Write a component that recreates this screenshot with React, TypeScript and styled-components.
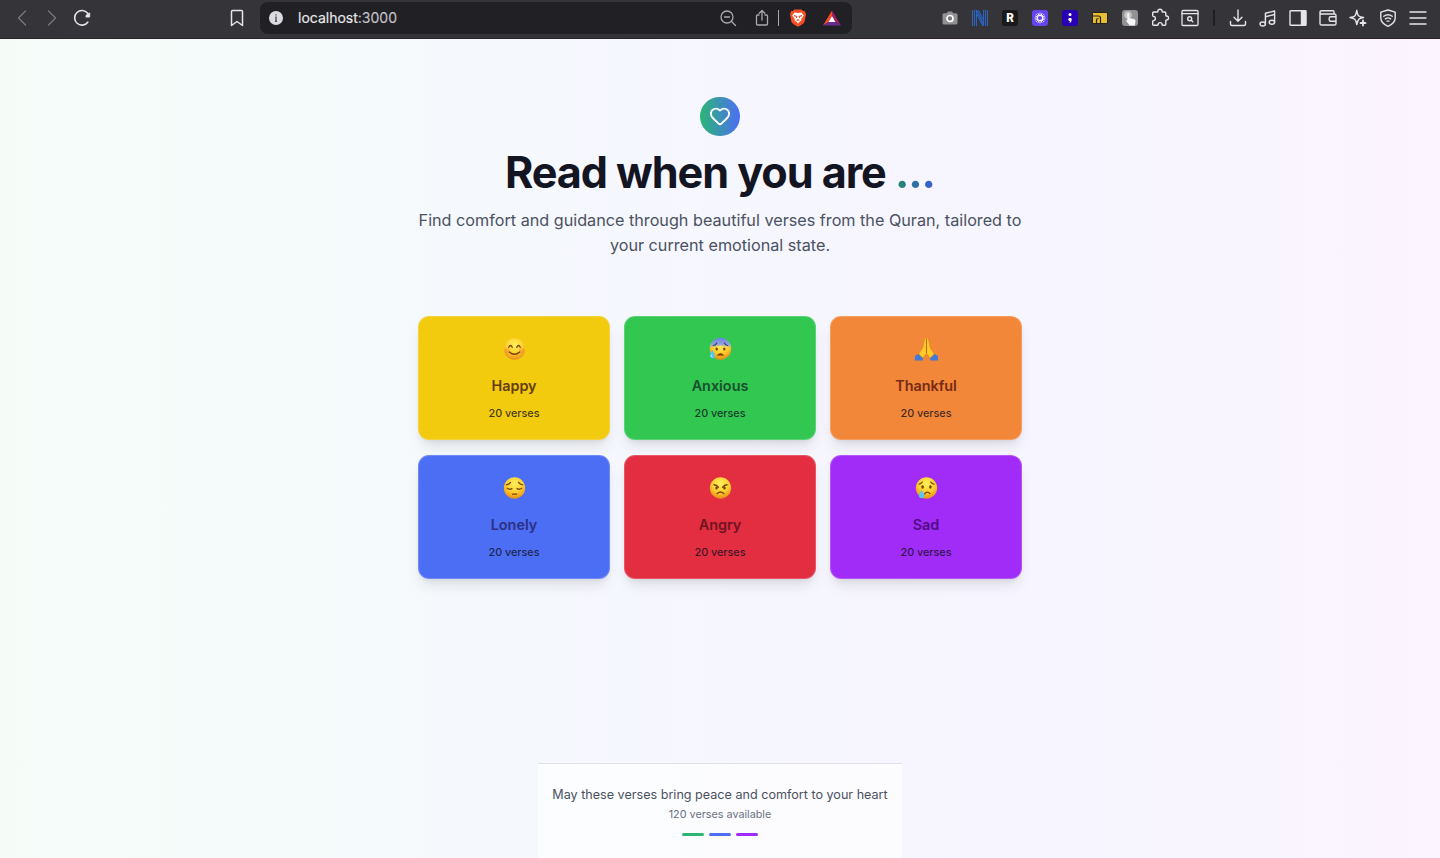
import React from "react";
import styled, { createGlobalStyle } from "styled-components";
import { Heart } from "lucide-react";

const GlobalStyle = createGlobalStyle`
  * { box-sizing: border-box; }
  body { margin: 0; font-family: Inter, "Liberation Sans", sans-serif; overflow: hidden; }
  h1, h2, p { margin: 0; }
  svg { display: block; flex: none; }
`;

const Window = styled.div`
  height: 858px;
  display: flex;
  flex-direction: column;
`;

const Toolbar = styled.header`
  height: 39px;
  flex: none;
  display: flex;
  align-items: center;
  padding: 0 12px 3px 12px;
  background: #353439;
  border-bottom: 1px solid #2c2328;
`;

const IconRow = styled.div<{ $gap: number; $ml?: number }>`
  display: flex;
  align-items: center;
  gap: ${(p) => p.$gap}px;
  margin-left: ${(p) => p.$ml ?? 0}px;
`;

const AddressBar = styled.div`
  width: 592px;
  height: 32px;
  margin-left: 13px;
  padding: 0 10px 0 6px;
  display: flex;
  align-items: center;
  border-radius: 8px;
  background: #212025;
`;

const Url = styled.span`
  flex: 1;
  margin-left: 12px;
  font: 400 14px/20px Inter, sans-serif;
  color: #e9e8ec;
  -webkit-text-stroke: 0.15px currentColor;
  span { color: #c3c2c8; }
`;

const Separator = styled.i<{ $dark?: boolean }>`
  width: ${(p) => (p.$dark ? 2 : 1)}px;
  height: 16px;
  background: ${(p) => (p.$dark ? "#1f1e23" : "#aaa9ae")};
`;

const Page = styled.main`
  flex: 1;
  min-height: 0;
  display: flex;
  flex-direction: column;
  align-items: center;
  padding-top: 58px;
  background: linear-gradient(to right, #f5fcf8 0%, #f5fbfa 14%, #f5f9fd 32%, #f6f6ff 52%, #f8f5ff 85%, #fcf4ff 100%);
`;

const Badge = styled.div`
  width: 40px;
  height: 39px;
  display: grid;
  justify-items: center;
  padding-top: 8px;
  border-radius: 20px;
  background: linear-gradient(to right, #2bb673, #4c6ef5);
`;

const Title = styled.h1`
  margin-top: 14px;
  font-size: 43.2px;
  line-height: 45px;
  font-weight: 700;
  letter-spacing: -1.08px;
  color: #141523;
`;

const Dots = styled.span`
  color: transparent;
  background: linear-gradient(to right, #228b68, #3b5bdb);
  background-clip: text;
  -webkit-background-clip: text;
`;

const Lead = styled.p`
  width: 605px;
  margin-top: 13px;
  font-size: 16.2px;
  line-height: 25px;
  text-align: center;
  color: #4a5161;
`;

const MoodGrid = styled.section`
  margin-top: 58px;
  display: grid;
  grid-template-columns: repeat(3, 192px);
  grid-auto-rows: 124px;
  gap: 15px 14px;
`;

const MoodCard = styled.article<{ $bg: string; $fg: string }>`
  display: flex;
  flex-direction: column;
  align-items: center;
  padding-top: 20px;
  border: 1px solid rgba(255, 255, 255, 0.2);
  border-radius: 11px;
  background: ${(p) => p.$bg};
  box-shadow: 0 9px 13.5px -3px rgba(0, 0, 0, 0.1), 0 4px 6px -4px rgba(0, 0, 0, 0.1);
  h2 {
    margin-top: 14px;
    font-size: 14.4px;
    line-height: 22px;
    font-weight: 600;
    color: ${(p) => p.$fg};
  }
  p {
    margin-top: 9px;
    font-size: 10.8px;
    line-height: 16px;
    font-weight: 500;
    color: rgba(15, 16, 32, 0.8);
  }
`;

const Footer = styled.footer`
  width: 364px;
  height: 95px;
  margin-top: auto;
  display: flex;
  flex-direction: column;
  align-items: center;
  padding-top: 21px;
  border-top: 1px solid #dfe3e8;
  background: rgba(255, 255, 255, 0.7);
`;

const Blessing = styled.p`
  font-size: 12.6px;
  line-height: 20px;
  color: #4a5161;
`;

const Available = styled.p`
  font-size: 10.8px;
  line-height: 19px;
  color: #6b7280;
`;

const Bars = styled.div`
  display: flex;
  gap: 5px;
  margin-top: 9px;
`;

const Bar = styled.i<{ $color: string }>`
  width: 22px;
  height: 3px;
  border-radius: 2px;
  background: ${(p) => p.$color};
`;

type Children = { children: React.ReactNode };

const Glyph = ({ children, color = "#e6e5e9", width = 1.4 }: Children & { color?: string; width?: number }) => (
  <svg width="20" height="20" viewBox="0 0 20 20" fill="none" stroke={color} strokeWidth={width} strokeLinecap="round" strokeLinejoin="round">
    {children}
  </svg>
);

const Tile = ({ children, fill }: Children & { fill: string }) => (
  <svg width="20" height="20" viewBox="0 0 20 20">
    <rect x="2" y="2" width="16" height="16" rx="3" fill={fill} />
    {children}
  </svg>
);

type Mood = "happy" | "anxious" | "thankful" | "lonely" | "angry" | "sad";

const line = { fill: "none", stroke: "#78430b", strokeWidth: 1.25, strokeLinecap: "round" as const };

const features: Record<Mood, React.ReactNode> = {
  happy: (
    <>
      <circle cx="4.3" cy="13.3" r="2.6" fill="#f2672e" opacity=".3" />
      <circle cx="18.7" cy="13.3" r="2.6" fill="#f2672e" opacity=".3" />
      <path d="M5.8 9.8q1.7-3.6 3.4 0M13.8 9.800q1.700-3.600 3.400 0M6.300 14.400q5.200 4.600 10.400 0" {...line} strokeWidth={1.4} />
    </>
  ),
  anxious: (
    <>
      <path d="M.8 11A10.700 10.700 0 0 1 22.200 11Q18 8.500 11.500 8.500T.8 11z" fill="url(#brow)" />
      <path d="M4.200 8q2.400-.3 3.500-2.400M15.300 5.600q1.200 2.100 3.500 2.400" {...line} stroke="#34478e" />
      <ellipse cx="7.700" cy="11.500" rx="1.200" ry="1.500" fill="#70400d" />
      <ellipse cx="15.300" cy="11.500" rx="1.200" ry="1.500" fill="#70400d" />
      <path d="M8.300 17.800q3.200-3.800 6.400 0z" fill="#78430b" stroke="#78430b" strokeWidth=".6" />
      <path d="M3.300 12.500q-2.600 3.700-2.600 5.700a2.600 2.600 0 0 0 5.200 0q0-2-2.600-5.700z" fill="#54c6f3" />
      <path d="M2.400 17.400q-.3 1.500 1 1.800" stroke="#d6f5ff" fill="none" />
    </>
  ),
  thankful: null,
  lonely: (
    <path d="M3.300 8.300q2.700-.2 4.200-2.400M15.500 5.900q1.400 2.100 4.200 2.400M4.200 11.600q2.200 2 4.700.5M14.100 12.100q2.500 1.500 4.700-.5M9.600 17.700h3.900" {...line} />
  ),
  angry: (
    <>
      <path d="M5 8.300q2.900.3 4.400 2.500M18 8.300q-2.900.3-4.400 2.500M8.200 17q3.300-2.800 6.600 0" {...line} strokeWidth={1.4} />
      <ellipse cx="7.500" cy="11.400" rx="1.250" ry="1.500" fill="#70400d" />
      <ellipse cx="15.500" cy="11.400" rx="1.250" ry="1.500" fill="#70400d" />
    </>
  ),
  sad: (
    <>
      <path d="M4 7.500q2 0 3.300-2M15.700 5.500q1.300 2 3.300 2M9.400 17.300q2.900-3.200 5.600-.2" {...line} />
      <ellipse cx="7.600" cy="10.500" rx="1.300" ry="1.800" fill="#70400d" />
      <ellipse cx="15.400" cy="10.500" rx="1.300" ry="1.800" fill="#70400d" />
      <path d="M6.600 13.500q-2.700 3.700-2.700 5.500a2.700 2.700 0 0 0 5.400 0q0-1.800-2.700-5.500z" fill="#58c8f1" />
    </>
  ),
};

const MoodIcon = ({ mood }: { mood: Mood }) =>
  mood === "thankful" ? (
    <svg width="24" height="24" viewBox="-.5 0 24 24">
      <path d="M.4 19 4.300 16.700 8.700 20.500 8 23.400H.4zM23.600 19 19.700 16.700 15.300 20.500 16 23.400h7.600z" fill="#4379d9" />
      <path d="M11.900 1.200q-1.400-.7-1.800 1.200L8.400 10.500 4.200 17.100 8.300 21 11.900 16.500zM12.100 1.200q1.400-.7 1.800 1.200L15.600 10.500 19.800 17.100 15.700 21 12.100 16.500z" fill="#ffc928" stroke="#d58b10" strokeWidth=".5" />
      <path d="M12 2v14" stroke="#a96510" strokeWidth=".8" />
    </svg>
  ) : (
    <svg width="24" height="24" viewBox="-1 -.5 24 24">
      <defs>
        <radialGradient id={`face-${mood}`} cx=".5" cy=".3" r=".72">
          <stop offset="0" stopColor="#fff05d" />
          <stop offset=".55" stopColor="#ffcf2e" />
          <stop offset="1" stopColor="#e88618" />
        </radialGradient>
        {mood === "anxious" && (
          <linearGradient id="brow" x1="0" y1="0" x2="0" y2="1">
            <stop offset="0" stopColor="#6582e4" />
            <stop offset=".6" stopColor="#93a3dc" />
            <stop offset="1" stopColor="#e8c95c" stopOpacity=".3" />
          </linearGradient>
        )}
      </defs>
      <circle cx="11.500" cy="11.500" r="10.700" fill={`url(#face-${mood})`} />
      {features[mood]}
    </svg>
  );

const moods: { mood: Mood; name: string; bg: string; fg: string }[] = [
  { mood: "happy", name: "Happy", bg: "#f2ca0e", fg: "#653b12" },
  { mood: "anxious", name: "Anxious", bg: "#32c751", fg: "#17502b" },
  { mood: "thankful", name: "Thankful", bg: "#f28639", fg: "#752b14" },
  { mood: "lonely", name: "Lonely", bg: "#4c6ef5", fg: "#2b2f83" },
  { mood: "angry", name: "Angry", bg: "#e22e40", fg: "#701421" },
  { mood: "sad", name: "Sad", bg: "#a12bf7", fg: "#530b86" },
];

const Extensions = () => (
  <>
    <svg width="20" height="20" viewBox="0 0 20 20">
      <path d="M4 5.300h2.700L8 3.500h4l1.300 1.800H16q1.500 0 1.500 1.500v8.200q0 1.500-1.500 1.500H4q-1.500 0-1.500-1.500V6.800q0-1.500 1.500-1.500z" fill="#929194" />
      <circle cx="10" cy="10.500" r="3" fill="#777" stroke="#fff" strokeWidth="1.700" />
    </svg>
    <svg width="20" height="20" viewBox="0 0 20 20" stroke="#2c62c0" strokeWidth="1.100">
      <path d="M2.500 2v16M4.500 2v16M6.500 2v16M13.500 2v16M15.500 2v16M17.500 2v16M7 2.500l6 13M7 6l6 12M8.500 2.500l4.500 9" fill="none" />
    </svg>
    <Tile fill="#1a1a1b">
      <text x="10" y="14.200" textAnchor="middle" fill="#fff" fontFamily="Inter, sans-serif" fontSize="11.500" fontWeight="800">R</text>
    </Tile>
    <Tile fill="#6744ee">
      <circle cx="10" cy="10" r="2.700" fill="none" stroke="#fff" strokeWidth="1.200" />
      <path d="M10 4.500v2.500M10 13v2.500M4.500 10H7M13 10h2.500M6.100 6.100l1.800 1.800M12.100 12.100l1.800 1.800M13.900 6.100l-1.800 1.800M7.900 12.100l-1.800 1.800M7.900 5l.8 2M11.300 13l.8 2M15 7.900l-2 .8M7 11.300l-2 .8M12.100 5l-.8 2M8.700 13l-.8 2M5 7.900l2 .8M13 11.300l2 .8" stroke="#fff" strokeWidth=".8" />
    </Tile>
    <Tile fill="#2700b5">
      <circle cx="10" cy="6.500" r="1.500" fill="#fff" />
      <path d="M8.200 11.300q.2-1.500 1.800-1.500 1.800 0 1.800 1.700 0 2.600-2.600 3.800.8-1.100.6-2.300-1.500-.2-1.600-1.700z" fill="#fff" />
    </Tile>
    <svg width="20" height="20" viewBox="0 0 20 20">
      <path d="M2.500 4.500h15v11h-15z" fill="#e8be34" stroke="#27231c" />
      <path d="M3 8h5.500q2 0 2 2v5.500M6.500 15.500V12q0-1.500 2-1.500" fill="none" stroke="#211e18" strokeWidth="1.200" />
    </svg>
    <Tile fill="#929292">
      <circle cx="8" cy="7" r="3.800" fill="#c5c5c5" />
      <path d="M7.200 6q0-1 1-1t1 1v4l5 1.200q1.600.3 1.300 1.900l-.7 4.400H9.700L6.100 13q.2-1.200 1.300-.8z" fill="#f4f6f8" />
    </Tile>
    <Glyph>
      <path d="M3.700 4h3.600q.5 0 .6-.7a2.100 2.100 0 0 1 4.200 0q.1.700.6.700h2.100q1 0 1 1v2.400q0 .5.700.6a2 2 0 0 1 0 4q-.7.1-.7.600v3.600q0 1-1 1h-2q-.6 0-.7-.6a2 2 0 0 0-4 0q-.1.600-.7.600H3.700q-1 0-1-1v-3q0-.5.600-.6a2 2 0 0 0 0-4.200q-.6-.1-.6-.6V5q0-1 1-1z" />
    </Glyph>
    <Glyph>
      <rect x="2" y="2.500" width="16" height="15" rx="1" strokeWidth="1.300" />
      <path d="M2 5.700h16" strokeWidth="1.300" />
      <circle cx="9.700" cy="10.700" r="2" />
      <path d="m11.200 12.200 1.600 1.600" />
    </Glyph>
  </>
);

const Tools = () => (
  <>
    <Glyph><path d="M10 2v11M6 9.300l4 4 4-4M2.500 13.500v2.500q0 1.500 1.500 1.500h12q1.500 0 1.500-1.500v-2.500" /></Glyph>
    <Glyph><ellipse cx="4.700" cy="16" rx="2.700" ry="2" /><ellipse cx="13.900" cy="14.200" rx="2.700" ry="2" /><path d="M7.400 16V5.200L16.600 3v11.200M7.400 8.700l9.200-2.200" /></Glyph>
    <Glyph><rect x="2" y="2.700" width="16" height="14.600" rx=".6" /><path d="M13.500 3.200h4v13.600h-4z" fill="#e6e5e9" /></Glyph>
    <Glyph><path d="M16 6V3.500q0-.8-.8-.8H4q-2 0-2 1.700v11q0 1.600 1.600 1.600h12.800q1.600 0 1.600-1.600V7.600Q18 6 16.400 6H3.500Q2 6 2 4.500M18 8.700h-5.300q-1.500 0-1.500 1.500v1.500q0 1.500 1.500 1.500H18" /></Glyph>
    <Glyph>
      <path d="M8.800 2.300q.7 4.700 2 5.700t4.800 1.500q-3.800.6-4.800 1.700t-2 5.300q-.8-4.200-2-5.300T2 9.500Q5.800 9 6.800 8t2-5.700z" />
      <path d="M15 12.500v5M12.500 15h5" strokeWidth="1.800" />
    </Glyph>
    <Glyph>
      <path d="m10 2 7.200 2.200v5.500q0 5.500-7.200 8.600-7.200-3.100-7.200-8.600V4.200z" />
      <path d="M5.800 8.300q4.200-3.200 8.400 0M7.400 10.900q2.600-2 5.200 0M9 13.200q1-.7 2 0" />
    </Glyph>
    <Glyph><path d="M2 4h16M2 10h16M2 16h16" /></Glyph>
  </>
);

export default function App() {
  return (
    <Window>
      <GlobalStyle />
      <Toolbar>
        <IconRow $gap={10}>
          <Glyph color="#77767b"><path d="m13.500 3-7 7 7 7" /></Glyph>
          <Glyph color="#77767b"><path d="m6.500 3 7 7-7 7" /></Glyph>
          <Glyph width={1.6}>
            <path d="M15.800 14.200A7.300 7.300 0 1 1 15.700 5.300" />
            <path d="M17.700 5.300v3.800h-3.800q-.3-3.200 3.800-3.800z" fill="#e6e5e9" strokeWidth=".8" />
          </Glyph>
        </IconRow>
        <IconRow $gap={0} $ml={135}>
          <Glyph width={1.5}><path d="M5.500 2.500h9q1 0 1 1v14l-5.500-4-5.500 4v-14q0-1 1-1z" /></Glyph>
        </IconRow>
        <AddressBar>
          <svg width="20" height="20" viewBox="0 0 20 20">
            <circle cx="10" cy="10" r="7" fill="#dcdbe1" />
            <path d="M10 6.200v1.300M9.200 9.200h.8v4M9 13.200h2" fill="none" stroke="#55545a" strokeWidth="1.400" />
          </svg>
          <Url>localhost<span>:3000</span></Url>
          <IconRow $gap={0}>
            <Glyph color="#aaa9ae" width={1.3}><circle cx="9" cy="9" r="6" /><path d="M6.500 9h5M13.500 13.500l4 4" /></Glyph>
            <IconRow $gap={6} $ml={14}>
              <Glyph color="#aaa9ae" width={1.3}><path d="M7 7H5.500q-1 0-1 1v8q0 1 1 1h9q1 0 1-1V8q0-1-1-1H13M10 12V2.500M7.200 5.200 10 2.500l2.800 2.700" /></Glyph>
              <Separator />
            </IconRow>
            <IconRow $gap={14} $ml={9}>
              <svg width="20" height="20" viewBox="0 0 20 20">
                <path d="M6.500 1.500h7l1.600 1.600 1.700-.2 1.200 3.500-1.500 7.500q-1 2-6.500 4.800-5.500-2.800-6.500-4.800L2 6.400l1.200-3.500 1.700.2z" fill="#fa4e24" />
                <path d="m6.500 4.500 3.500.6 3.500-.6 2.300 3-2.600 3.600.2 1.400-2.100 1.300L10 15.700l-1.300-1.900-2.100-1.300.2-1.400-2.600-3.600z" fill="#fff" />
                <path d="m6 7.600 2.700.8-.3 1.600M14 7.600l-2.700.8.3 1.600M8.700 12.500l1.300-.8 1.300.8" fill="none" stroke="#fa4e24" strokeWidth="1.100" />
              </svg>
              <svg width="20" height="20" viewBox="0 0 20 20">
                <path d="M10 2.500v5.400L6.500 14 1 17.500z" fill="#ff4724" />
                <path d="m10 2.500 9 15-5.500-3.500L10 7.900z" fill="#9e1f63" />
                <path d="M1 17.500 6.500 14h7l5.500 3.500z" fill="#662d91" />
                <path d="m10 7.900 3.500 6.100h-7z" fill="#fff" />
              </svg>
            </IconRow>
          </IconRow>
        </AddressBar>
        <IconRow $gap={10} $ml={88}><Extensions /></IconRow>
        <IconRow $gap={0} $ml={13}><Separator $dark /></IconRow>
        <IconRow $gap={10} $ml={13}><Tools /></IconRow>
      </Toolbar>
      <Page>
        <Badge><Heart size={22} color="#fff" strokeWidth={2} /></Badge>
        <Title>Read when you are <Dots>...</Dots></Title>
        <Lead>Find comfort and guidance through beautiful verses from the Quran, tailored to your current emotional state.</Lead>
        <MoodGrid>
          {moods.map((m) => (
            <MoodCard key={m.name} $bg={m.bg} $fg={m.fg}>
              <MoodIcon mood={m.mood} />
              <h2>{m.name}</h2>
              <p>20 verses</p>
            </MoodCard>
          ))}
        </MoodGrid>
        <Footer>
          <Blessing>May these verses bring peace and comfort to your heart</Blessing>
          <Available>120 verses available</Available>
          <Bars>
            <Bar $color="#2bb673" />
            <Bar $color="#4c6ef5" />
            <Bar $color="#a12bf7" />
          </Bars>
        </Footer>
      </Page>
    </Window>
  );
}
